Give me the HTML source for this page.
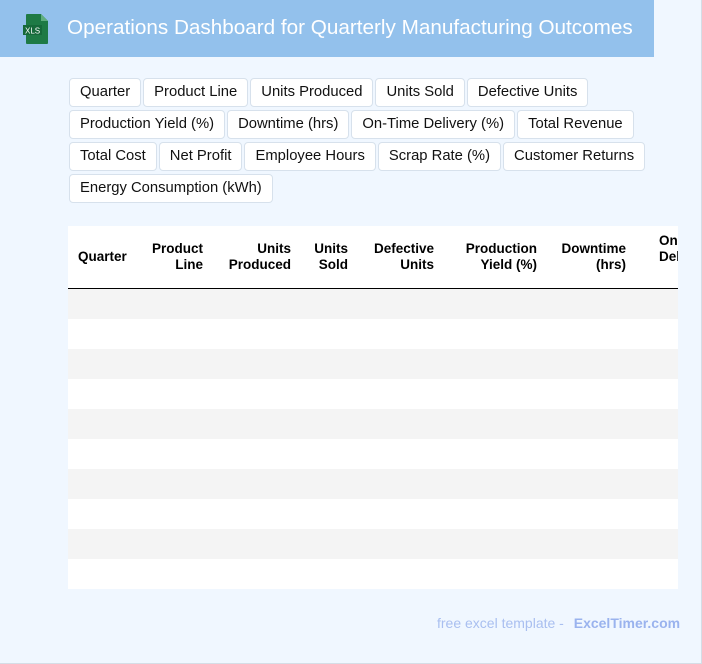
<!DOCTYPE html>
<html><head><meta charset="utf-8"><style>
*{margin:0;padding:0;box-sizing:border-box}
body{width:702px;height:664px;background:#fff;font-family:"Liberation Sans",sans-serif;position:relative;overflow:hidden}
.page{position:absolute;left:0;top:0;width:702px;height:664px;background:#f0f7ff;border-right:1px solid #d5dde6;border-bottom:1px solid #d5dde6}
.hdr{position:absolute;left:0;top:0;width:654px;height:57px;background:#93c1ec}
.hdr h1{position:absolute;left:67px;top:16px;font-size:20.7px;font-weight:normal;color:#fff;white-space:nowrap}
.chips{position:absolute;left:69px;top:78px;width:580px;display:flex;flex-wrap:wrap;gap:3px 2px}
.chip{height:29px;line-height:27px;padding:0 10px;background:#fff;border:1px solid #d7e1ec;border-radius:4px;font-size:14.8px;color:#111;white-space:nowrap}
.tbl{position:absolute;left:68px;top:226px;width:610px;height:363px;background:#fff;overflow:hidden}
.th{position:absolute;font-weight:bold;font-size:13.5px;line-height:16px;color:#000;white-space:nowrap}
.r{text-align:right}
.line{position:absolute;left:0;top:62px;width:610px;height:1px;background:#000}
.row{position:absolute;left:0;width:610px;height:30px}
.foot{position:absolute;top:615px;left:437px;font-size:14px;color:#a9bff0;white-space:nowrap}
.foot b{color:#9ab3ee;margin-left:6px}
</style></head><body>
<div class="page">
<div class="hdr">
<svg style="position:absolute;left:22px;top:13px" width="28" height="32" viewBox="0 0 28 32">
<path d="M5 1h14l7 7v22a1 1 0 0 1-1 1H5a1 1 0 0 1-1-1V2a1 1 0 0 1 1-1z" fill="#1e7a45"/>
<path d="M19 1v7h7z" fill="#5fae7e"/>
<rect x="1" y="12" width="19" height="10" fill="#16693a"/>
<text x="3" y="20.5" font-family="Liberation Sans" font-size="8" fill="#fff">XLS</text>
</svg>
<h1>Operations Dashboard for Quarterly Manufacturing Outcomes</h1>
</div>
<div class="chips">
<div class="chip">Quarter</div><div class="chip">Product Line</div><div class="chip">Units Produced</div><div class="chip">Units Sold</div><div class="chip">Defective Units</div>
<div class="chip">Production Yield (%)</div><div class="chip">Downtime (hrs)</div><div class="chip">On-Time Delivery (%)</div><div class="chip">Total Revenue</div>
<div class="chip">Total Cost</div><div class="chip">Net Profit</div><div class="chip">Employee Hours</div><div class="chip">Scrap Rate (%)</div><div class="chip">Customer Returns</div>
<div class="chip">Energy Consumption (kWh)</div>
</div>
<div class="tbl">
<div class="th" style="left:10px;top:23px">Quarter</div>
<div class="th r" style="right:475px;top:15px">Product<br>Line</div>
<div class="th r" style="right:387px;top:15px">Units<br>Produced</div>
<div class="th r" style="right:330px;top:15px">Units<br>Sold</div>
<div class="th r" style="right:244px;top:15px">Defective<br>Units</div>
<div class="th r" style="right:141px;top:15px">Production<br>Yield (%)</div>
<div class="th r" style="right:52px;top:15px">Downtime<br>(hrs)</div>
<div class="th" style="left:591px;top:7px">On-Time<br>Delivery (%)</div>
<div class="line"></div>
<div class="row" style="top:63px;background:#f4f4f4"></div>
<div class="row" style="top:123px;background:#f4f4f4"></div>
<div class="row" style="top:183px;background:#f4f4f4"></div>
<div class="row" style="top:243px;background:#f4f4f4"></div>
<div class="row" style="top:303px;background:#f4f4f4"></div>
</div>
<div class="foot">free excel template - <b>ExcelTimer.com</b></div>
</div>
</body></html>
